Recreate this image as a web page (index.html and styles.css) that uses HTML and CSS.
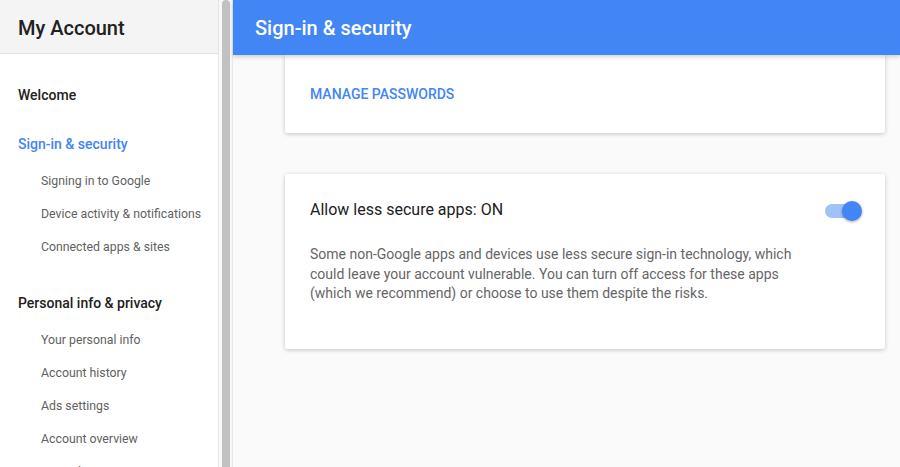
FILE: index.html
```html
<!DOCTYPE html>
<html lang="en">
<head>
<meta charset="utf-8">
<title>My Account - Sign-in &amp; security</title>
<link rel="stylesheet" href="styles.css">
</head>
<body>
<div class="app">
  <aside class="sidebar">
    <div class="sidebar-head">My Account</div>
    <nav class="nav">
      <div class="nav-section">
        <div class="nav-heading">Welcome</div>
      </div>
      <div class="nav-section">
        <div class="nav-heading active">Sign-in &amp; security</div>
        <ul class="nav-list">
          <li>Signing in to Google</li>
          <li>Device activity &amp; notifications</li>
          <li>Connected apps &amp; sites</li>
        </ul>
      </div>
      <div class="nav-section">
        <div class="nav-heading">Personal info &amp; privacy</div>
        <ul class="nav-list">
          <li>Your personal info</li>
          <li>Account history</li>
          <li>Ads settings</li>
          <li>Account overview</li>
          <li>Control your content</li>
        </ul>
      </div>
    </nav>
  </aside>
  <div class="scrollbar"><div class="thumb"></div></div>
  <main class="main">
    <header class="topbar">Sign-in &amp; security</header>
    <div class="content">
      <section class="card card-cut">
        <a class="link-btn">MANAGE PASSWORDS</a>
      </section>
      <section class="card card-setting">
        <div class="setting-row">
          <h2 class="setting-title">Allow less secure apps: ON</h2>
          <div class="toggle"><div class="toggle-track"></div><div class="toggle-knob"></div></div>
        </div>
        <p class="setting-desc">Some non-Google apps and devices use less secure sign-in technology, which could leave your account vulnerable. You can turn off access for these apps (which we recommend) or choose to use them despite the risks.</p>
      </section>
    </div>
  </main>
</div>
</body>
</html>
```

FILE: styles.css
```css
* { box-sizing: border-box; }
html, body {
  margin: 0;
  padding: 0;
  height: 100%;
  overflow: hidden;
}
body {
  font-family: Roboto, "Liberation Sans", Arial, sans-serif;
  background: #fafafa;
  color: #212121;
}
.app {
  display: flex;
  height: 467px;
}
.sidebar {
  width: 218px;
  flex: none;
  background: #fff;
  overflow: hidden;
}
.sidebar-head {
  height: 54px;
  background: #f4f4f4;
  border-bottom: 1px solid #e0e0e0;
  padding-left: 18px;
  font-size: 20px;
  font-weight: 500;
  line-height: 56px;
  color: #212121;
}
.nav {
  padding: 31px 0 0 0;
  display: flex;
  flex-direction: column;
  gap: 29px;
}
.nav-heading {
  padding-left: 18px;
  font-size: 14px;
  font-weight: 500;
  line-height: 20px;
  color: #212121;
}
.nav-heading.active { color: #4285f4; }
.nav-list {
  list-style: none;
  margin: 11px 0 0 0;
  padding: 0;
}
.nav-list li {
  height: 33px;
  line-height: 33px;
  padding-left: 41px;
  font-size: 12.3px;
  color: #616161;
  white-space: nowrap;
}
.scrollbar {
  width: 15px;
  flex: none;
  background: #f8f8f8;
  border-left: 1px solid #e6e6e6;
  border-right: 1px solid #e8e8e8;
  padding-left: 3px;
}
.thumb {
  width: 8px;
  height: 100%;
  background: #c1c1c1;
  border-radius: 4px 4px 0 0;
}
.main {
  flex: 1;
  display: flex;
  flex-direction: column;
  background: #fafafa;
  min-width: 0;
}
.topbar {
  height: 55px;
  flex: none;
  background: #4285f4;
  color: #fff;
  font-size: 20px;
  font-weight: 500;
  line-height: 56px;
  padding-left: 22px;
  box-shadow: 0 2px 4px rgba(0,0,0,0.18);
  position: relative;
  z-index: 2;
}
.content {
  padding-left: 52px;
  display: flex;
  flex-direction: column;
  gap: 41px;
}
.card {
  width: 600px;
  background: #fff;
  border-radius: 2px;
  box-shadow: 0 1px 4px rgba(0,0,0,0.22);
}
.card-cut {
  border-radius: 0 0 2px 2px;
  padding: 29px 24px 29px 25px;
}
.link-btn {
  display: block;
  font-size: 14px;
  font-weight: 500;
  line-height: 20px;
  color: #4285f4;
  letter-spacing: 0;
}
.card-setting {
  padding: 24px 23px 45px 25px;
}
.setting-row {
  display: flex;
  align-items: center;
  justify-content: space-between;
}
.setting-title {
  margin: 0;
  font-size: 16px;
  font-weight: 400;
  line-height: 24px;
  color: #212121;
}
.toggle {
  position: relative;
  width: 37px;
  height: 20px;
  margin-top: 1px;
}
.toggle-track {
  position: absolute;
  left: 0;
  top: 3px;
  width: 34px;
  height: 14px;
  border-radius: 7px;
  background: #a0c2f9;
}
.toggle-knob {
  position: absolute;
  right: 0;
  top: 0;
  width: 20px;
  height: 20px;
  border-radius: 50%;
  background: #4285f4;
  box-shadow: 0 1px 3px rgba(0,0,0,0.35);
}
.setting-desc {
  margin: 23px 0 0 0;
  font-size: 14px;
  line-height: 19.5px;
  color: #666;
  max-width: 500px;
}
```
